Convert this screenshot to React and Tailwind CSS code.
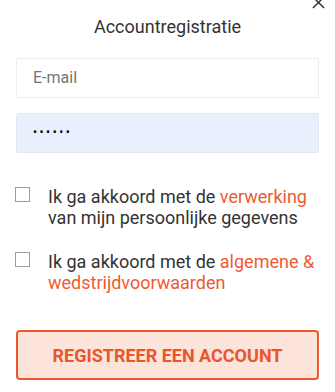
export default function App() {
  return (
    <div className="relative h-[392px] w-[335px] overflow-hidden bg-white font-['Roboto',sans-serif]">
      {/* close button, cut off by the top edge */}
      <svg className="absolute right-[10px] top-[-4px]" width="13" height="13" viewBox="0 0 14 14" fill="none" stroke="#333" strokeWidth="1.6">
        <path d="M1 1l12 12M13 1L1 13" />
      </svg>

      <div className="px-4 pt-[16px]">
        <h1 className="text-center text-[18px] leading-[22px] text-[#333]">Accountregistratie</h1>

        <div className="mt-[20px] flex flex-col gap-[15px]">
          <div className="flex h-10 items-center rounded-[2px] border border-[#ececec] bg-white px-4 text-[16px] text-[#757575]">
            E-mail
          </div>
          <div className="flex h-10 items-center rounded-[2px] border border-[#e3e8f0] bg-[#e8f0fe] px-4 text-black">
            <span className="mb-[2px] text-[12px] tracking-[2.5px]">••••••</span>
          </div>
        </div>

        <div className="mt-[33px] flex flex-col gap-[23px]">
          <label className="ml-[-1px] flex gap-[18px]">
            <span className="mt-[1px] h-[15px] w-[15px] shrink-0 border border-[#9e9e9e] bg-white" />
            <span className="text-[18px] leading-[21px] text-[#333]">
              Ik ga akkoord met de <span className="text-[#ef5a30]">verwerking</span> van mijn persoonlijke gegevens
            </span>
          </label>
          <label className="ml-[-1px] flex gap-[18px]">
            <span className="mt-[1px] h-[15px] w-[15px] shrink-0 border border-[#9e9e9e] bg-white" />
            <span className="text-[18px] leading-[21px] text-[#333]">
              Ik ga akkoord met de <span className="text-[#ef5a30]">algemene &amp; wedstrijdvoorwaarden</span>
            </span>
          </label>
        </div>

        <button className="mt-[37px] flex h-[50px] w-full items-center justify-center rounded-[4px] border-2 border-[#eb5a2e] bg-[#fce4da] text-[18px] font-bold text-[#e8572a]">
          REGISTREER EEN ACCOUNT
        </button>
      </div>
    </div>
  );
}
